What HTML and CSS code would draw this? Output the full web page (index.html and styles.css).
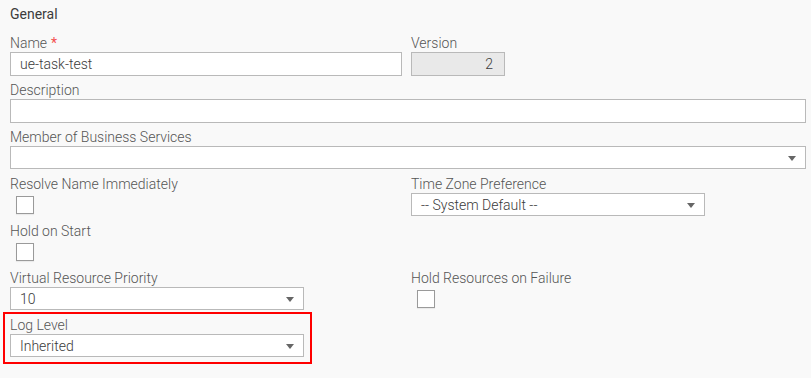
FILE: index.html
```html
<!DOCTYPE html>
<html lang="en">
<head>
  <meta charset="UTF-8" />
  <title>Task Details</title>
  <link rel="stylesheet" href="styles.css">
</head>
<body>
  <main class="panel">
    <h2 class="section-title">General</h2>
    <div class="form-grid">
      <div class="field">
        <label for="name">Name<span class="req">*</span></label>
        <input type="text" id="name" class="input" value="ue-task-test" />
      </div>
      <div class="field">
        <label for="version">Version</label>
        <input type="text" id="version" class="input input-version" value="2" readonly />
      </div>

      <div class="field span-2">
        <label for="description">Description</label>
        <input type="text" id="description" class="input" />
      </div>

      <div class="field span-2">
        <label>Member of Business Services</label>
        <div class="select"><span></span><i class="caret"></i></div>
      </div>

      <div class="field">
        <label>Resolve Name Immediately</label>
        <div class="check-wrap"><span class="checkbox"></span></div>
      </div>
      <div class="field">
        <label>Time Zone Preference</label>
        <div class="select select-short"><span>-- System Default --</span><i class="caret"></i></div>
      </div>

      <div class="field span-2">
        <label>Hold on Start</label>
        <div class="check-wrap"><span class="checkbox"></span></div>
      </div>

      <div class="field">
        <label>Virtual Resource Priority</label>
        <div class="select select-short"><span>10</span><i class="caret"></i></div>
      </div>
      <div class="field">
        <label>Hold Resources on Failure</label>
        <div class="check-wrap"><span class="checkbox"></span></div>
      </div>

      <div class="field span-2">
        <div class="highlight">
          <label>Log Level</label>
          <div class="select select-short"><span>Inherited</span><i class="caret"></i></div>
        </div>
      </div>
    </div>
  </main>
</body>
</html>
```

FILE: styles.css
```css
* {
  box-sizing: border-box;
}
body {
  margin: 0;
  background: #f9f9f9;
  font-family: Roboto, 'Liberation Sans', sans-serif;
  font-size: 14px;
  font-weight: 300;
  color: #444;
}
.panel {
  padding: 6px 5px 0 10px;
}
.section-title {
  margin: 0 0 14px;
  font-size: 14px;
  line-height: 16px;
  font-weight: 400;
  color: #3c3c3c;
}
.form-grid {
  display: grid;
  grid-template-columns: 392px 1fr;
  column-gap: 9px;
}
.span-2 {
  grid-column: 1 / -1;
}
.field {
  margin-bottom: 7px;
}
.field label {
  display: block;
  height: 16px;
  line-height: 15px;
  color: #555;
}
.req {
  color: #f45050;
  font-weight: 400;
  margin-left: 4px;
}
.input {
  display: block;
  width: 100%;
  height: 24px;
  margin: 0;
  padding: 0 9px;
  border: 1px solid #b9b9b9;
  background: #fff;
  font-family: inherit;
  font-size: 14px;
  font-weight: 300;
  color: #3a3a3a;
  outline: none;
}
.input-version {
  width: 94px;
  background: #e9e9e9;
  text-align: right;
  padding-right: 11px;
}
.select {
  display: flex;
  align-items: center;
  justify-content: space-between;
  height: 23px;
  padding: 0 9px 0 9px;
  border: 1px solid #b9b9b9;
  background: #fff;
  color: #3a3a3a;
  margin-bottom: 1px;
}
.select-short {
  width: 294px;
}
.caret {
  width: 0;
  height: 0;
  border-left: 4px solid transparent;
  border-right: 4px solid transparent;
  border-top: 5px solid #666;
  margin-top: 1px;
}
.check-wrap {
  height: 24px;
  padding: 3px 0 0 6px;
}
.checkbox {
  display: block;
  width: 18px;
  height: 18px;
  border: 1px solid #9a9a9a;
  background: #fff;
  box-shadow: 0 1px 1px rgba(0, 0, 0, 0.06);
}
.highlight {
  width: 309px;
  margin: -6px 0 0 -7px;
  padding: 4px 6px 4px 5px;
  border: 2px solid #f00;
}
```
